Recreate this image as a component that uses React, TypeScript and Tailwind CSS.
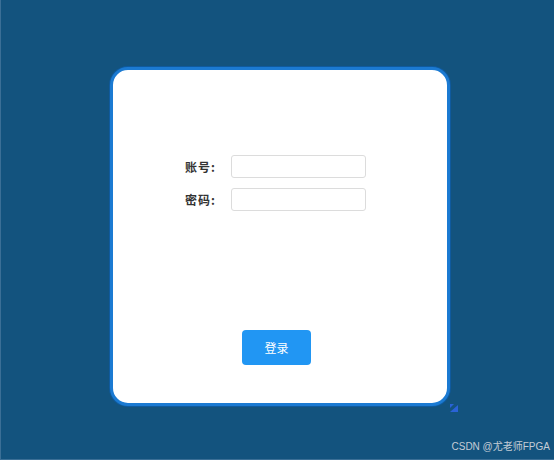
export default function App() {
  const inputClass =
    "w-[135px] h-[23px] border border-[#dcdcdc] rounded-[3px] bg-white outline-none px-1 text-[12px]";
  return (
    <div className="relative w-[554px] h-[460px] bg-[#13537e] border-l border-b border-[#3b6f96] pt-[67px] pl-[109px] font-['Noto_Sans_CJK_SC',sans-serif]">
      <div className="w-[340px] h-[339px] rounded-[18px] border-[3px] border-[#1b7ad2] shadow-[0_0_0_1px_#0f5a9e] bg-white pt-[85px] flex flex-col">
        <div className="flex items-center pl-[72px] h-[23px]">
          <span className="w-[46px] text-[12px] font-bold text-[#333] tracking-[1px]">账号:</span>
          <input className={inputClass} />
        </div>
        <div className="flex items-center pl-[72px] h-[23px] mt-[10px]">
          <span className="w-[46px] text-[12px] font-bold text-[#333] tracking-[1px]">密码:</span>
          <input className={inputClass} />
        </div>
        <div className="pl-[129px] mt-[119px]">
          <button className="w-[69px] h-[35px] rounded-[4px] bg-[#2196f3] text-white text-[12px]">
            登录
          </button>
        </div>
      </div>
      <svg className="absolute left-[449px] top-[404px]" width="8" height="8" viewBox="0 0 8 8">
        <path d="M0 8 L8 1 L8 8 Z" fill="#2a63d8" />
        <path d="M0 0 L4 0 L0 4 Z" fill="#2a63d8" />
      </svg>
      <div className="absolute right-[4px] bottom-[5px] text-[10px] text-[#c4ccd6] font-['Liberation_Sans','Noto_Sans_CJK_SC',sans-serif]">
        CSDN @尤老师FPGA
      </div>
    </div>
  );
}
